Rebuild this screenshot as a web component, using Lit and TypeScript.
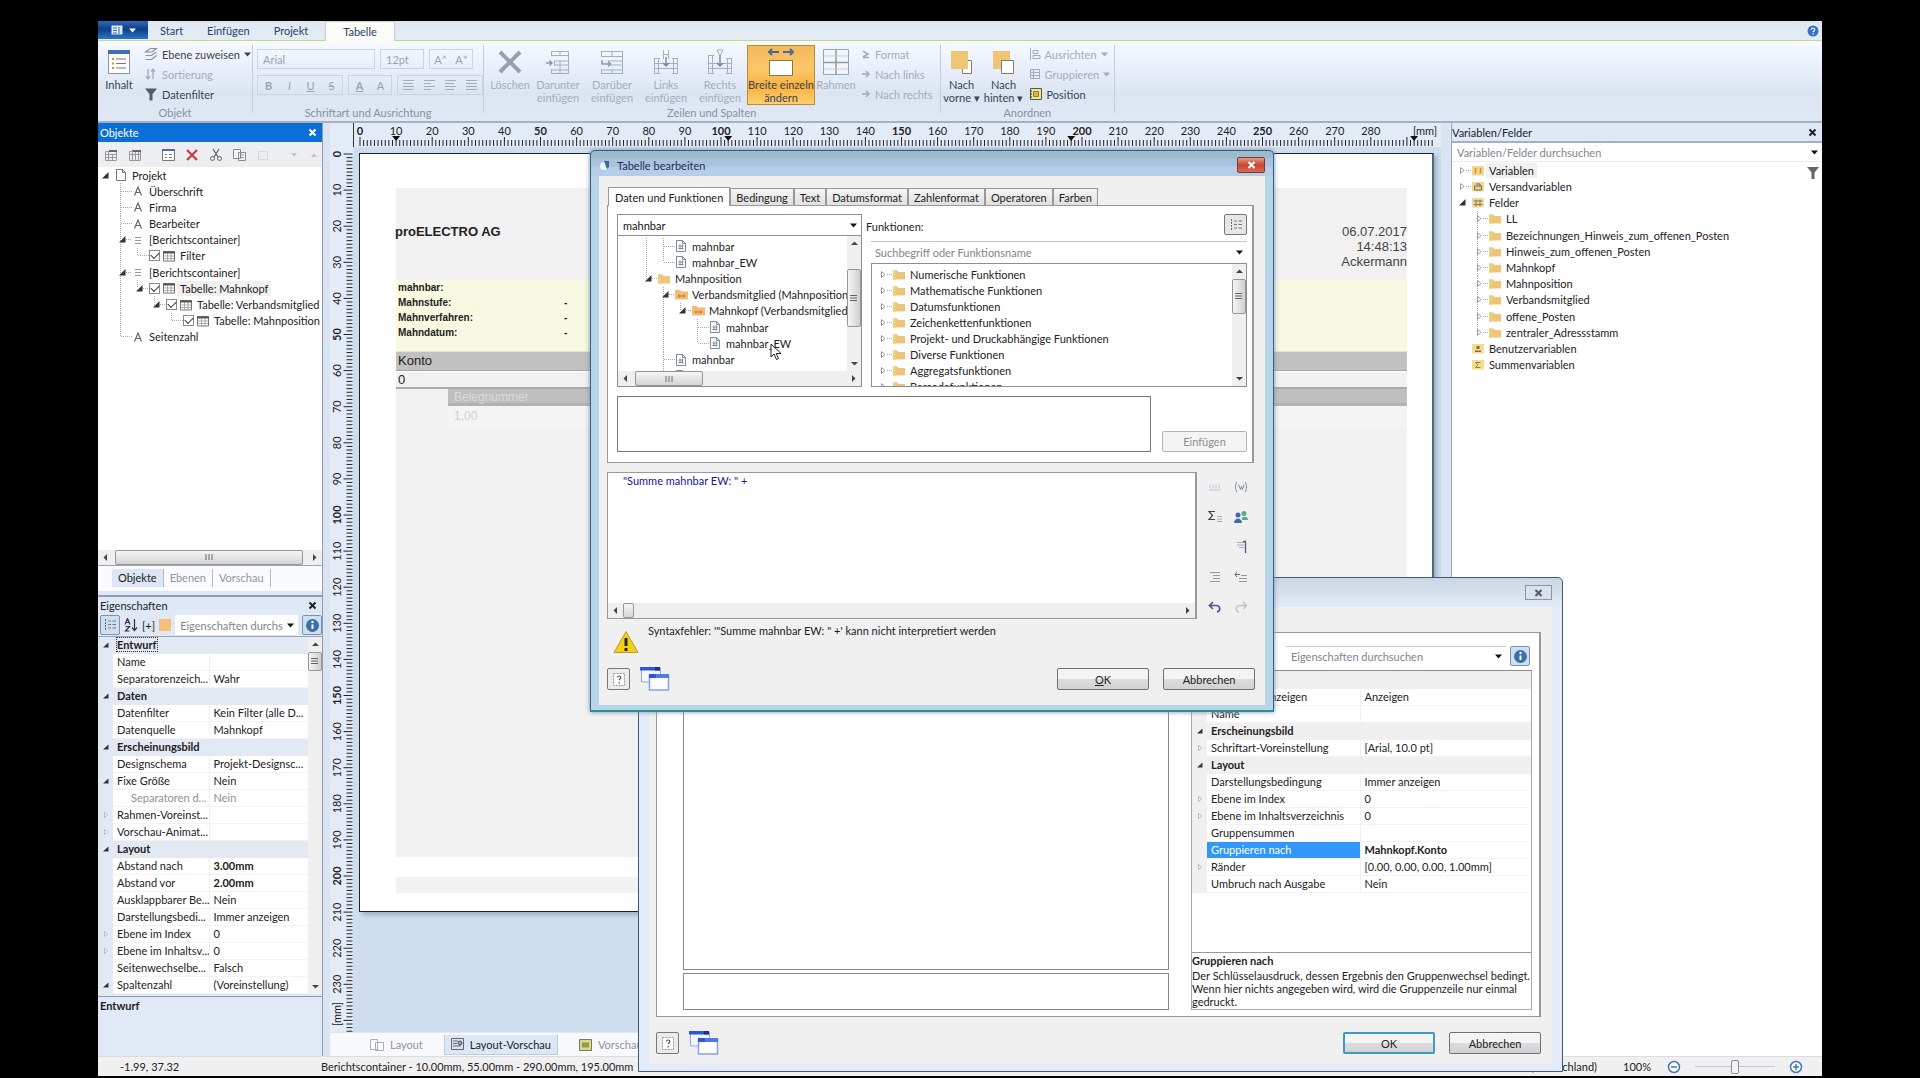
import { LitElement, html, svg, css, nothing } from "lit";
import { customElement, property } from "lit/decorators.js";
import { classMap } from "lit/directives/class-map.js";

const base = css`
  * { box-sizing: border-box; }
  button, input, textarea, select { font: inherit; color: inherit; margin: 0; padding: 0; border: 0; background: none; border-radius: 0; outline: none; }
  button { display: inline-flex; align-items: center; justify-content: center; }
  input::placeholder { color: #7f858c; opacity: 1; }
  svg { display: block; flex: none; }
`;

/* ---------- small icons ---------- */
const ic = (w: number, h: number, body: unknown) =>
  html`<svg width=${w} height=${h} viewBox="0 0 ${w} ${h}" fill="none" aria-hidden="true">${body}</svg>`;

const icons: Record<string, () => unknown> = {
  page: () => ic(12, 14, svg`<path d="M1.500 1.500h6l3 3v8h-9z" fill="#fff" stroke="#777"/><path d="M7.500 1.500v3h3" stroke="#777"/>`),
  text: () => ic(12, 12, svg`<path d="M2.500 10.500L6 2l3.500 8.500M3.800 7.500h4.400" stroke="#666" stroke-width="1.200"/>`),
  container: () => ic(12, 12, svg`<path d="M3 3.500h6M3 6.500h6M3 9.500h6" stroke="#999"/>`),
  table: () => ic(12, 12, svg`<path d="M.5 1.500h11v9.500H.5z" fill="#fff" stroke="#777"/><path d="M0 2.500h12" stroke="#555" stroke-width="2"/><path d="M1 6h10M1 8.500h10M4.500 3v8M8 3v8" stroke="#999" stroke-width=".8"/>`),
  folder: () => ic(12, 11, svg`<path d="M0 1.500h4.500l1 1.500H12v7.500H0z" fill="#efc47a"/><path d="M0 1.500h3v9H0z" fill="#e8cf7d"/>`),
  folderLink: () => ic(13, 11, svg`<path d="M0 1h5l1 1.500h7v8H0z" fill="#f4ba72"/><path d="M3 7h7M4.500 5.500L3 7l1.500 1.500M8.500 5.500L10 7 8.500 8.500" stroke="#b07a3a"/>`),
  vars: () => ic(12, 11, svg`<path d="M0 1h12v9.500H0z" fill="#f0d78c"/><path d="M3.500 3v5.500M8.500 3v5.500" stroke="#c9923e" stroke-width="1.500"/>`),
  mail: () => ic(12, 11, svg`<path d="M0 1h12v9.500H0z" fill="#ecd98f"/><path d="M2.500 5h7v4h-7zM4 3h4v2" stroke="#6d6a58"/>`),
  grid: () => ic(12, 11, svg`<path d="M0 1h12v9.500H0z" fill="#efdca0"/><path d="M1.500 4h9M1.500 7.500h9M4 2.500v7M8 2.500v7" stroke="#8a7a4a"/>`),
  user: () => ic(12, 11, svg`<path d="M0 1h12v9.500H0z" fill="#f2dd90"/><path d="M4.500 3h3v3h-3z" fill="#8a6a3a"/><path d="M3 9h6V7.500H3z" fill="#8a6a3a"/>`),
  sum: () => ic(12, 11, svg`<path d="M0 1h12v9.500H0z" fill="#f2e08c"/><path d="M8.500 3.500h-5L6 5.800 3.500 8.500h5" stroke="#8d8442"/>`),
  field: () => ic(12, 14, svg`<path d="M1.500 1.500h6l3 3v8h-9z" fill="#fff" stroke="#7f8a99"/><path d="M7.500 1.500v3h3M3.500 7h5M3.500 9.500h5M5 5.500v5M7.500 5.500v5" stroke="#7f8a99"/>`),
  info: () => ic(15, 15, svg`<circle cx="7.500" cy="7.500" r="6.500" fill="#3b6fa8"/><path d="M7.500 6.500v4.500" stroke="#fff" stroke-width="2"/><circle cx="7.500" cy="4" r="1.200" fill="#fff"/>`),
  listSort: () => ic(14, 14, svg`<path d="M2.500 1v12" stroke="#666" stroke-dasharray="2 1"/><path d="M5 3h3M5 6.500h3M5 10h3M9.500 3H13M9.500 6.500H13M9.500 10H13" stroke="#777"/>`),
  close: () => ic(9, 9, svg`<path d="M1.500 1.500l6 6M7.500 1.500l-6 6" stroke="currentColor" stroke-width="2"/>`),
  drop: () => ic(7, 5, svg`<path d="M0 .5h7L3.500 4.500z" fill="currentColor"/>`),
  question: () => ic(14, 15, svg`<path d="M1.500 1.500h11v12h-11z" fill="#fff" stroke="#999" stroke-dasharray="2 1"/><path d="M5.500 5.500c0-2 3.300-2 3.300 0 0 1.300-1.600 1.200-1.600 2.700M7.200 10v1.500" stroke="#555" stroke-width="1.200"/>`),
  windows: () => ic(31, 26, svg`<path d="M1.500 2h19v14h-19z" fill="#f4f7ff" stroke="#8fa8ee"/><path d="M0 1h20v3.500H0z" fill="#2f56d8"/><path d="M15 1h5v3.500h-5z" fill="#23307e"/><path d="M9.500 9h19v15h-19z" fill="#fdfdff" stroke="#86a0f0" stroke-width="1.500"/><path d="M9 8h20v4H9z" fill="#4f78ea"/><path d="M9 8h7v4H9z" fill="#2f56d8"/>`),
  warn: () => ic(26, 24, svg`<path d="M13 1.500L25 22.500H1z" fill="#f5cf12" stroke="#b79c2a" stroke-linejoin="round"/><path d="M13 8v8" stroke="#222" stroke-width="3"/><path d="M13 18v3" stroke="#222" stroke-width="3"/>`),
};

/* ---------- scroll bar ---------- */
@customElement("scroll-bar")
export class ScrollBar extends LitElement {
  @property() dir = "h";
  @property({ type: Number }) start = 0;
  @property({ type: Number }) size = 50;
  static styles = [base, css`
    :host { display: flex; flex: none; background: #efefef; }
    :host([dir="h"]) { height: 15px; }
    :host([dir="v"]) { width: 14px; flex-direction: column; }
    .arrow { flex: none; width: 15px; height: 15px; display: grid; place-items: center; }
    :host([dir="v"]) .arrow { width: 14px; }
    .track { flex: 1; display: flex; min-height: 0; min-width: 0; }
    :host([dir="v"]) .track { flex-direction: column; }
    .thumb { border: 1px solid #979797; border-radius: 2px; background: linear-gradient(#f6f6f6, #d4d4d4); display: grid; place-items: center; flex: none; }
    :host([dir="v"]) .thumb { background: linear-gradient(90deg, #f6f6f6, #cfcfd2); }
    .gap { flex: none; }
  `];
  render() {
    const v = this.dir === "v";
    const dim = v ? "height" : "width";
    return html`
      <span class="arrow">${ic(7, 7, v ? svg`<path d="M0 5h7L3.500 1.500z" fill="#444"/>` : svg`<path d="M5 0v7L1.500 3.500z" fill="#444"/>`)}</span>
      <span class="track">
        <span class="gap" style="${dim}:${this.start}%"></span>
        <span class="thumb" style="${dim}:${this.size}%">
          ${v ? ic(8, 8, svg`<path d="M0 1.500h7M0 4h7M0 6.500h7" stroke="#666"/>`) : this.size > 5 ? ic(8, 8, svg`<path d="M1 1v6M4 1v6M7 1v6" stroke="#666"/>`) : nothing}
        </span>
      </span>
      <span class="arrow">${ic(7, 7, v ? svg`<path d="M0 2h7L3.500 5.500z" fill="#444"/>` : svg`<path d="M2 0v7l3.500-3.500z" fill="#444"/>`)}</span>`;
  }
}

/* ---------- tree ---------- */
interface Node { l: number; t: string; i: string; x?: "open" | "closed"; check?: boolean; sel?: boolean; }

@customElement("tree-view")
export class TreeView extends LitElement {
  @property({ attribute: false }) nodes: Node[] = [];
  static styles = [base, css`
    :host { display: grid; grid-auto-rows: 1fr; overflow: hidden; }
    .row { display: flex; align-items: center; min-height: 0; white-space: nowrap; padding-left: 4px; }
    .cell { width: 17px; align-self: stretch; flex: none; display: flex; justify-content: flex-end; }
    .line { width: 1px; background: repeating-linear-gradient(#aaa 0 1px, transparent 1px 2px); height: 100%; }
    .line.end { height: 50%; }
    .elbow { width: 11px; flex: none; display: flex; align-items: center; }
    .elbow svg { margin-left: -2px; }
    .dots { flex: 1; height: 1px; background: repeating-linear-gradient(90deg, #aaa 0 1px, transparent 1px 2px); }
    .icon { width: 12px; height: 14px; display: grid; place-items: center; flex: none; }
    .text { margin-left: 2px; padding: 0 3px; line-height: 15px; }
    .sel .text { background: #f0f0f0; }
    input { appearance: none; width: 11px; height: 11px; border: 1px solid #8a8a8a; background: #fff; margin-right: 3px; flex: none; display: grid; place-items: center; }
    input:checked::after { content: ""; width: 7px; height: 4px; border-left: 1px solid #333; border-bottom: 1px solid #333; transform: rotate(-45deg); margin-bottom: 2px; }
  `];
  private line(i: number, k: number) {
    const rest = this.nodes.slice(i + 1);
    for (const n of rest) {
      if (n.l === k) return "on";
      if (n.l < k) break;
    }
    return this.nodes[i].l === k ? "end" : "";
  }
  render() {
    return this.nodes.map((n, i) => html`
      <div class=${classMap({ row: true, sel: !!n.sel })} role="treeitem">
        ${Array.from({ length: n.l }, (_, k) => {
          const s = this.line(i, k + 1);
          return html`<span class="cell">${s ? html`<span class="line ${s}"></span>` : nothing}</span>`;
        })}
        <span class="elbow">
          ${n.x === "open" ? ic(7, 7, svg`<path d="M6.500 0v6.500H0z" fill="#333"/>`) : nothing}
          ${n.x === "closed" ? ic(7, 9, svg`<path d="M1.500 1.500v6l3.500-3z" stroke="#999" fill="#fff"/>`) : nothing}
          ${n.l > 0 || n.x === "closed" ? html`<span class="dots"></span>` : nothing}
        </span>
        ${n.check ? html`<input type="checkbox" checked aria-label=${n.t}>` : nothing}
        <span class="icon">${icons[n.i]()}</span>
        <span class="text">${n.t}</span>
      </div>`);
  }
}

/* ---------- property grid ---------- */
interface Prop { n: string; v?: string; head?: boolean; x?: "open" | "closed"; dim?: boolean; bold?: boolean; sel?: boolean; focus?: boolean; pad?: boolean; }

@customElement("prop-grid")
export class PropGrid extends LitElement {
  @property({ attribute: false }) rows: Prop[] = [];
  @property() tone = "blue";
  static styles = [base, css`
    :host { display: block; min-width: 0; --band: #e2e9f2; --name: 96px; --gut: 15px; }
    :host([tone="gray"]) { --band: #f0f0f0; --name: 153px; --gut: 15px; }
    table { width: 100%; border-collapse: collapse; table-layout: fixed; background: #fff; }
    tr { height: 17px; }
    td, th { padding: 0; font-weight: normal; text-align: left; line-height: 16px; white-space: nowrap; overflow: hidden; border-bottom: 1px solid #f3f3f6; }
    .gut { width: var(--gut); background: var(--band); border-color: var(--band); }
    .gut svg { margin: 0 auto; }
    .name { width: var(--name); border-right: 1px solid #f0f0f3; padding-left: 4px; }
    .value { padding-left: 4px; }
    .head td, .head th { background: var(--band); border-color: var(--band); font-weight: bold; }
    .dim { color: #8f8f8f; }
    .bold .value { font-weight: bold; }
    .pad .name { padding-left: 18px; }
    .sel .name { background: #3296fa; color: #fff; }
    .focus .tag { outline: 1px dotted #333; }
  `];
  render() {
    return html`<table><tbody>${this.rows.map((r) => html`
      <tr class=${classMap({ head: !!r.head, dim: !!r.dim, bold: !!r.bold, sel: !!r.sel, focus: !!r.focus, pad: !!r.pad })}>
        <td class="gut">
          ${r.head || r.x === "open" ? ic(6, 6, svg`<path d="M5.500 .5v5H0z" fill="#333"/>`) : nothing}
          ${r.x === "closed" ? ic(6, 8, svg`<path d="M1.500 1.500v5l3-2.500z" stroke="#b5bbc4" fill="#fff"/>`) : nothing}
        </td>
        <th class="name" scope="row"><span class="tag">${r.n}</span></th>
        <td class="value">${r.v ?? ""}</td>
      </tr>`)}</tbody></table>`;
  }
}

/* ---------- millimetre ruler ---------- */
const MM = 3.61;
@customElement("mm-ruler")
export class MmRuler extends LitElement {
  @property() dir = "h";
  @property({ type: Number }) count = 298;
  @property({ attribute: false }) marks: number[] = [];
  static styles = [base, css`
    :host { display: block; flex: none; background: #e3ebf6; overflow: hidden; }
    :host([dir="h"]) { height: 24px; }
    :host([dir="v"]) { width: 23px; }
    text { font-size: 11px; fill: #222; text-anchor: middle; }
    .b { font-weight: bold; }
  `];
  render() {
    const h = this.dir === "h";
    const zero = h ? 6 : 7;
    const out = [];
    for (let i = 0; i <= this.count; i++) {
      const p = zero + i * MM;
      const len = i % 10 === 0 ? 9 : 6;
      out.push(h ? svg`<path d="M${p} 23v${-len}" stroke="#222"/>` : svg`<path d="M22.500 ${p}h${-len}" stroke="#222"/>`);
      if (i % 10 === 0 && i < this.count - 8) {
        const c = i % 50 === 0 ? "b" : "";
        out.push(h ? svg`<text class=${c} x=${p} y="12">${i}</text>` : svg`<text class=${c} transform="translate(11 ${p}) rotate(-90)">${i}</text>`);
      }
    }
    const e = h ? 1071 : 867;
    out.push(h ? svg`<text x=${e} y="12">[mm]</text>` : svg`<text transform="translate(11 ${e}) rotate(-90)">[mm]</text>`);
    for (const m of this.marks) out.push(svg`<path d="M${zero + m * MM - 4} 13h8l-4 5z" fill="#111"/>`);
    return html`<svg width=${h ? 1088 : 23} height=${h ? 24 : 885} aria-hidden="true">${out}</svg>`;
  }
}

const combo = (label: string, opts: { value?: string; ph?: string } = {}) => html`
  <span class="combo">
    <input type="text" aria-label=${label} .value=${opts.value ?? ""} placeholder=${opts.ph ?? ""}>
    <button type="button" aria-label="${label} öffnen">${icons.drop()}</button>
  </span>`;

const objects: Node[] = [
  { l: 0, t: "Projekt", i: "page", x: "open" },
  { l: 1, t: "Überschrift", i: "text" },
  { l: 1, t: "Firma", i: "text" },
  { l: 1, t: "Bearbeiter", i: "text" },
  { l: 1, t: "[Berichtscontainer]", i: "container", x: "open" },
  { l: 2, t: "Filter", i: "table", check: true },
  { l: 1, t: "[Berichtscontainer]", i: "container", x: "open" },
  { l: 2, t: "Tabelle: Mahnkopf", i: "table", check: true, x: "open", sel: true },
  { l: 3, t: "Tabelle: Verbandsmitglied", i: "table", check: true, x: "open" },
  { l: 4, t: "Tabelle: Mahnposition", i: "table", check: true },
  { l: 1, t: "Seitenzahl", i: "text" },
];
const variables: Node[] = [
  { l: 0, t: "Variablen", i: "vars", x: "closed", sel: true },
  { l: 0, t: "Versandvariablen", i: "mail", x: "closed" },
  { l: 0, t: "Felder", i: "grid", x: "open" },
  ...["LL", "Bezeichnungen_Hinweis_zum_offenen_Posten", "Hinweis_zum_offenen_Posten", "Mahnkopf", "Mahnposition", "Verbandsmitglied", "offene_Posten", "zentraler_Adressstamm"]
    .map((t): Node => ({ l: 1, t, i: "folder", x: "closed" })),
  { l: 0, t: "Benutzervariablen", i: "user" },
  { l: 0, t: "Summenvariablen", i: "sum" },
];
const found: Node[] = [
  { l: 2, t: "mahnbar", i: "field" },
  { l: 2, t: "mahnbar_EW", i: "field" },
  { l: 1, t: "Mahnposition", i: "folder", x: "open" },
  { l: 2, t: "Verbandsmitglied (Mahnposition", i: "folderLink", x: "open" },
  { l: 3, t: "Mahnkopf (Verbandsmitglied", i: "folderLink", x: "open" },
  { l: 4, t: "mahnbar", i: "field" },
  { l: 4, t: "mahnbar_EW", i: "field" },
  { l: 2, t: "mahnbar", i: "field" },
  { l: 2, t: "mahnbar_EW", i: "field" },
];
const functions: Node[] = ["Numerische Funktionen", "Mathematische Funktionen", "Datumsfunktionen", "Zeichenkettenfunktionen", "Projekt- und Druckabhängige Funktionen", "Diverse Funktionen", "Aggregatsfunktionen", "Barcodefunktionen"]
  .map((t) => ({ l: 0, t, i: "folder", x: "closed" }));

const props: Prop[] = [
  { n: "Entwurf", head: true, focus: true },
  { n: "Name" },
  { n: "Separatorenzeich...", v: "Wahr" },
  { n: "Daten", head: true },
  { n: "Datenfilter", v: "Kein Filter (alle D..." },
  { n: "Datenquelle", v: "Mahnkopf" },
  { n: "Erscheinungsbild", head: true },
  { n: "Designschema", v: "Projekt-Designsc..." },
  { n: "Fixe Größe", v: "Nein", x: "open" },
  { n: "Separatoren d...", v: "Nein", dim: true, pad: true },
  { n: "Rahmen-Voreinst...", x: "closed" },
  { n: "Vorschau-Animat...", x: "closed" },
  { n: "Layout", head: true },
  { n: "Abstand nach", v: "3.00mm", bold: true },
  { n: "Abstand vor", v: "2.00mm", bold: true },
  { n: "Ausklappbarer Be...", v: "Nein" },
  { n: "Darstellungsbedi...", v: "Immer anzeigen" },
  { n: "Ebene im Index", v: "0", x: "closed" },
  { n: "Ebene im Inhaltsv...", v: "0", x: "closed" },
  { n: "Seitenwechselbe...", v: "Falsch" },
  { n: "Spaltenzahl", v: "(Voreinstellung)", x: "open" },
];
const groupProps: Prop[] = [
  { n: "", head: true },
  { n: "Kopfzeilen anzeigen", v: "Anzeigen" },
  { n: "Name" },
  { n: "Erscheinungsbild", head: true },
  { n: "Schriftart-Voreinstellung", v: "[Arial, 10.0 pt]", x: "closed" },
  { n: "Layout", head: true },
  { n: "Darstellungsbedingung", v: "Immer anzeigen" },
  { n: "Ebene im Index", v: "0", x: "closed" },
  { n: "Ebene im Inhaltsverzeichnis", v: "0", x: "closed" },
  { n: "Gruppensummen" },
  { n: "Gruppieren nach", v: "Mahnkopf.Konto", bold: true, sel: true },
  { n: "Ränder", v: "[0.00, 0.00, 0.00, 1.00mm]", x: "closed" },
  { n: "Umbruch nach Ausgabe", v: "Nein" },
];

/* ---------- ribbon drawings ---------- */
const big = {
  content: ic(24, 26, svg`<path d="M1.500 1.500h21v23h-21z" fill="#fff" stroke="#8c95a3"/><path d="M1 1h22v4H1z" fill="#3f72b4"/><path d="M5 10h2M5 14.500h2M5 19h2" stroke="#e08a3a" stroke-width="2"/><path d="M9 10h10M9 14.500h10M9 19h10" stroke="#777"/>`),
  del: ic(26, 26, svg`<path d="M3 3l20 20M23 3L3 23" stroke="#98a0ac" stroke-width="4"/>`),
  below: ic(26, 26, svg`<path d="M6 2.500h18M6 6.500h18M9 12h15M9 16h15M6 21h18M6 24.500h18M6.500 2v5M15 2v5M23.500 2v23M9.500 12v5M15 12v13M6.500 20v5" stroke="#a6afbc"/><path d="M1 14h6M4.500 11.500L7 14l-2.500 2.500" stroke="#8e98a6" stroke-width="1.500"/>`),
  above: ic(26, 26, svg`<path d="M2 2.500h22M2 7.500h22M9 12h15M9 16h15M2 21h22M2 24.500h22M2.500 2v6M13 2v6M23.500 2v23M2.500 20v5M13 20v5" stroke="#a6afbc"/><path d="M3 11v4h8M9 12.500l2.500 2.500L9 17.500" stroke="#8e98a6" stroke-width="1.500"/>`),
  left: ic(26, 26, svg`<path d="M1.500 9v16M5.500 9v16M20.500 9v16M24.500 9v16M1 9.500h6M19 9.500h6M1 14.500h24M1 19.500h24M1 24.500h6M19 24.500h6M10.500 1v9M15.500 1v9M10 5.500h6" stroke="#a6afbc"/><path d="M13 8v9M10 14l3 3 3-3" stroke="#828c9a" stroke-width="1.500"/>`),
  right: ic(26, 26, svg`<path d="M1.500 6v19M5.500 6v19M20.500 9v16M24.500 9v16M1 6.500h6M19 9.500h6M1 14.500h24M1 19.500h24M1 24.500h6M19 24.500h6M10 1h6l-3 6z" stroke="#a6afbc"/><path d="M13 6v11M10 14l3 3 3-3" stroke="#828c9a" stroke-width="1.500"/>`),
  width: ic(26, 28, svg`<path d="M1 4h10M15 4h10M4 1L1 4l3 3M22 1l3 3-3 3" stroke="#4b6a9b" stroke-width="2"/><path d="M1.500 12.500h23v15h-23z" fill="#fff" stroke="#8b7440"/>`),
  frame: ic(26, 26, svg`<path d="M.5 .5h25v25H.5z" fill="#f2f5fa" stroke="#9aa4b2"/><path d="M13 1v24M1 13.500h24" stroke="#8e98a6" stroke-width="1.500"/><path d="M1 7h24M1 20h24" stroke="#c8d0dc"/>`),
  front: ic(24, 28, svg`<path d="M12.500 12.500h9v13h-9z" fill="#fff" stroke="#8a7a66"/><path d="M1 3h17v18H1z" fill="#efc675"/>`),
  back: ic(24, 28, svg`<path d="M1 3h17v18H1z" fill="#efc675"/><path d="M9.500 12.500h12v13h-12z" fill="#fff" stroke="#8a7a66"/>`),
};
const sm = {
  layers: ic(14, 14, svg`<path d="M1.500 5l5-3.500h6L8 5zM1.500 8.500h6l5-3.500M1.500 12.500h6l5-4" stroke="#888f9a" stroke-width="1.200"/>`),
  sort: ic(14, 14, svg`<path d="M4 2v10M9 2v10M2 9.500L4 12l2-2.500M7 4.500L9 2l2 2.500" stroke="#a3abb8" stroke-width="1.300"/>`),
  filter: ic(14, 14, svg`<path d="M1 1.500h12L8.500 7v6.500h-3V7z" fill="#555b64"/>`),
  fmt: ic(10, 10, svg`<path d="M2 2l5 3-5 3M2 8.500h6" stroke="#a3abb8" stroke-width="1.500"/>`),
  dot: ic(10, 10, svg`<path d="M1 5h7M5 2l3 3-3 3" stroke="#a3abb8" stroke-width="1.500"/>`),
  align: ic(12, 14, svg`<path d="M1.500 1v12M4 3.500h5v3H4zM4 8.500h7v3H4z" stroke="#a3abb8"/>`),
  group: ic(12, 14, svg`<path d="M1.500 2.500h9v9h-9zM1.500 5.500h9M1.500 8.500h9M4.500 2.500v9" stroke="#a3abb8"/>`),
  pos: ic(14, 14, svg`<path d="M1.500 1.500h11v11h-11z" fill="#eee79a" stroke="#555"/><path d="M4.500 4.500h5v5h-5z" fill="#d5b94a" stroke="#8a7a2a"/><path d="M1 4h2M1 7h2M1 10h2" stroke="#333"/>`),
};
const largeBtn = (drawing: unknown, a: string, b = "", cls = "") => html`
  <button type="button" class="large ${cls}"><span class="pic">${drawing}</span><span>${a}</span><span>${b}</span></button>`;
const smallBtn = (drawing: unknown, t: string, cls = "", drop = false) => html`
  <button type="button" class="small ${cls}">${drawing}<span>${t}</span>${drop ? icons.drop() : nothing}</button>`;

const helpPair = html`
  <button type="button" class="help" aria-label="Hilfe">${icons.question()}</button>
  <button type="button" class="wins" aria-label="Fenster">${icons.windows()}</button>`;

@customElement("app-root")
export class AppRoot extends LitElement {
  static styles = [base, css`
    :host { display: block; height: 100vh; background: #000; font-family: Lato, "Open Sans", sans-serif; font-size: 11px; line-height: 15px; color: #222; }
    .app { position: relative; height: 100%; margin: 0 98px; padding-top: 21px; display: flex; flex-direction: column; overflow: hidden; }
    .tabs { height: 20px; flex: none; display: flex; align-items: stretch; background: linear-gradient(#e0e7f2, #e4edf3); border-bottom: 1px solid #bddd84; color: #2b3e6e; }
    .tabs button { padding: 0 12px; }
    .tabs .menu { width: 50px; padding: 0; gap: 6px; margin-bottom: 1px; background: linear-gradient(#2f6ab8, #0d3f87 45%, #2a74c8); color: #fff; }
    .tabs .active { background: #fbfdf6; border: 1px solid #c5cdd8; border-bottom: 0; margin: 0 0 -1px 5px; padding: 0 17px; }
    .tabs .q { margin-left: auto; padding: 0 3px; }

    .ribbon { height: 82px; flex: none; display: flex; background: linear-gradient(#f6fafe, #e8effa 35%, #dbe5f1 65%, #e0e8f4); border-bottom: 2px solid #a3b1c4; color: #3a4354; }
    .group { display: flex; flex-direction: column; border-right: 1px solid #c3cedd; margin: 4px 0 8px; }
    .tools { flex: 1; display: flex; min-height: 0; }
    .cap { text-align: center; line-height: 13px; height: 13px; color: #8791a3; margin-bottom: -6px; }
    .large { flex-direction: column; justify-content: flex-start; line-height: 13px; padding: 1px 0 0; width: 54px; white-space: nowrap; flex: none; }
    .large .pic { height: 32px; display: grid; place-items: center; flex: none; }
    .large.n { width: 42px; }
    .large.w { width: 68px; background: linear-gradient(#f2b95a, #fbc76a 40%, #f9b13d 70%, #fdd070); border: 1px solid #b98d3c; padding: 0; height: 60px; }
    .off { color: #a4adbb; }
    .smalls { display: flex; flex-direction: column; justify-content: space-between; padding: 1px 4px 1px; height: 58px; align-items: flex-start; }
    .small { gap: 4px; white-space: nowrap; height: 16px; }
    .fonts { flex: 1; padding: 4px 4px 0; display: flex; flex-direction: column; gap: 6px; color: #9aa3b2; }
    .frow { display: flex; gap: 5px; height: 20px; }
    .frow span.box { display: flex; border: 1px solid #cbd4e1; align-items: center; }
    .frow select { appearance: none; height: 18px; color: #9aa3b2; padding: 0 5px; }
    .frow button { width: 21px; }
    .serif { font-weight: bold; }
    .cells { padding: 0 3px 0 5px; }

    .main { flex: 1; min-height: 0; display: flex; background: #dbe5f2; }
    .left { width: 225px; flex: none; display: flex; flex-direction: column; border-right: 1px solid #8e9db5; background: #dfe8f4; }
    .title { height: 18px; flex: none; display: flex; align-items: center; justify-content: space-between; padding: 0 4px 0 2px; background: #dfe8f5; }
    .title button { width: 12px; height: 12px; }
    .title.on { background: #0c6fd8; color: #fff; height: 19px; }
    .bar { height: 25px; flex: none; display: flex; align-items: center; gap: 10px; padding: 0 6px; background: #eceef2; }
    .bar i { width: 1px; height: 18px; background: #b8bec8; }
    .treebox { flex: 1; min-height: 0; background: #fff; display: flex; flex-direction: column; justify-content: space-between; }
    .objtree { height: 178px; margin-left: 2px; }
    .ltabs { height: 26px; flex: none; display: flex; align-items: flex-start; background: #fafbfd; border-top: 1px solid #9aa5b5; padding: 3px 14px; color: #8f959e; }
    .ltabs button { height: 18px; padding: 0 6px; border-right: 1px solid #b5bbc4; }
    .ltabs .active { background: #dce6f4; color: #222; }
    .lower { flex: none; display: flex; flex-direction: column; border-top: 2px solid #8e9db5; margin-top: 4px; }
    .pbar { height: 22px; display: flex; align-items: center; gap: 4px; border-bottom: 1px solid #9aa5b5; padding-left: 2px; }
    .pbar .combo { flex: 1; min-width: 0; height: 20px; background: #fff; }
    .pbar button.ib, .ib { width: 20px; height: 20px; border: 1px solid #7d93ad; background: #cfdff2; border-radius: 2px; flex: none; }
    .sw { width: 12px; height: 12px; background: #f4c078; }
    .pgrid { display: flex; }
    .pgrid prop-grid { flex: 1; }
    .desc { height: 60px; border-top: 1px solid #8e9db5; margin-top: 2px; padding: 1px 2px; font-weight: bold; background: #e0e9f5; }

    .combo { display: flex; align-items: center; }
    .combo input { flex: 1; min-width: 0; padding-left: 5px; text-overflow: clip; }
    .combo button { width: 15px; height: 100%; color: #111; }

    .center { flex: 1; min-width: 0; display: flex; flex-direction: column; margin-left: 7px; }
    .ctop { display: flex; padding-left: 23px; background: #e3ebf6; }
    .ctop mm-ruler { flex: 1; border-left: 1px solid #333; }
    .cmid { flex: 1; min-height: 0; display: flex; overflow: hidden; }
    .canvas { flex: 1; min-width: 0; background: #cfdeee; padding: 6px 7px 0 6px; }
    .sheet { background: #fff; border: 1px solid #1b2430; border-right: 2px solid #54657e; box-shadow: 3px 3px 4px #9fb2c8; padding: 34px 25px 18px 36px; font-family: "Liberation Sans", Arial, sans-serif; }
    .area { background: #f1f1f1; height: 669px; }
    .lead { height: 92px; display: flex; justify-content: space-between; padding-top: 36px; font-size: 13px; }
    .lead strong { margin-left: -1px; line-height: 15px; }
    .lead div { text-align: right; line-height: 15px; color: #444; }
    .info { height: 72px; background: #f8f9e0; font-size: 10px; font-weight: bold; padding: 0 2px; border-bottom: 1px solid #e4e5cc; }
    .info div { display: flex; height: 15px; align-items: center; }
    .info span { width: 166px; }
    .hd { background: #c1c1c1; height: 19px; font-size: 13px; line-height: 18px; padding-left: 2px; border-bottom: 1px solid #a5a5a5; }
    .rw { height: 18px; font-size: 13px; line-height: 16px; padding-left: 2px; border-top: 1px solid #fff; border-bottom: 2px solid #aaa; }
    .sub { margin-left: 52px; font-size: 12px; }
    .sub .h2 { background: #bfbfbf; color: #dadada; height: 17px; line-height: 16px; padding-left: 6px; border-bottom: 3px solid #b2b2b2; }
    .sub .r2 { height: 22px; line-height: 20px; color: #d0d0d0; padding-left: 6px; background: #f4f4f4; }
    .foot { height: 16px; background: #f2f2f2; margin-top: 20px; }
    .ctabs { height: 24px; flex: none; display: flex; align-items: center; padding: 0 0 0 34px; gap: 15px; background: #f7f9fc; border-top: 1px solid #dfe6f0; color: #8f959e; }
    .ctabs button { gap: 6px; height: 20px; padding: 0 6px; }
    .ctabs .active { background: #dce7f5; color: #222; border: 1px solid #c0cad8; border-top: 0; }

    .right { width: 371px; flex: none; margin-left: 10px; display: flex; flex-direction: column; background: #fff; border-left: 1px solid #9aa8bf; }
    .right .title { border-bottom: 2px solid #a4afc0; height: 20px; padding: 0 4px 0 0; }
    .search { height: 18px; display: flex; }
    .search .combo { flex: 1; }
    .rt { display: flex; align-items: flex-start; border-top: 1px solid #ececec; justify-content: space-between; }
    .vartree { height: 211px; margin-left: 5px; flex: 1; }
    .rt > svg { margin: 4px 3px 0 0; }

    .status { height: 20px; flex: none; display: flex; align-items: center; background: #f0f0f0; border-top: 1px solid #d8dde4; margin-bottom: 2px; padding: 0 19px 0 22px; }
    .status .p { width: 201px; }
    .status .s { flex: 1; }
    .zoom { display: flex; align-items: center; gap: 14px; }
    .zoom span { margin: 0 2px 0 26px; }
    .zoom input { appearance: none; width: 80px; height: 14px; background: linear-gradient(#c3c8cf, #c3c8cf) center / 100% 1px no-repeat; }
    .zoom input::-webkit-slider-thumb { appearance: none; width: 8px; height: 14px; border: 1px solid #8b929b; background: #f4f4f4; border-radius: 2px; }

    .win { position: absolute; display: flex; flex-direction: column; border: 1px solid #3e5a78; }
    .win .wt { display: flex; align-items: center; flex: none; }
    .win .wt h2 { font: inherit; margin: 0; flex: 1; }
    .win .body { flex: 1; min-height: 0; background: #f0f0f0; display: flex; flex-direction: column; }
    .btn { height: 22px; width: 92px; border: 1px solid #707070; border-radius: 2px; background: linear-gradient(#f4f4f4 48%, #dcdcdc 52%, #d2d2d2); color: #222; }
    .btn.def { border: 2px solid #3c9cc9; }
    .btn.dis { color: #8d8d8d; border-color: #b4b4b4; background: #f4f4f4; width: 85px; height: 21px; }
    .actions { display: flex; align-items: center; }
    .actions .grow { flex: 1; }
    .help { width: 23px; height: 22px; border: 1px solid #777; background: #ececec; border-radius: 2px; margin-right: 10px; }
    u { text-decoration: underline; }

    .group-win { left: 540px; top: 577px; width: 925px; height: 495px; background: linear-gradient(#cbd6e4, #e3ebf6 30px); padding: 0 10px 7px; border-radius: 5px 5px 0 0; }
    .group-win .wt { height: 29px; justify-content: flex-end; }
    .group-win .x { width: 27px; height: 15px; border: 1px solid #8895a8; background: #d9e1ec; color: #556; }
    .group-win .body { padding: 25px 11px 0 7px; }
    .gpage { height: 385px; background: #fff; border: 1px solid #999; border-right-width: 2px; display: flex; padding: 13px 7px 6px 26px; gap: 22px; }
    .gl { flex: 1; display: flex; flex-direction: column; gap: 3px; }
    .gl div { border: 1px solid #888; flex: 1; }
    .gl div + div { flex: none; height: 37px; }
    .gr { width: 341px; display: flex; flex-direction: column; }
    .gs { display: flex; justify-content: flex-end; height: 24px; gap: 4px; align-items: flex-start; padding-right: 2px; }
    .gs .combo { width: 220px; height: 20px; border-top: 1px solid #ccc; }
    .gb { flex: 1; border: 1px solid #aaa; border-top: 1px solid #888; display: flex; flex-direction: column; justify-content: space-between; }
    .gd { height: 57px; border-top: 1px solid #999; line-height: 13px; }
    .gd b { display: block; line-height: 16px; }
    .group-win .actions { padding-top: 13px; }

    .edit-win { left: 492px; top: 150px; width: 684px; height: 562px; border-color: #2c5e86; border-bottom: 2px solid #2a9098; background: linear-gradient(#9cbccb 7px, #a9c2e0 8px 15px, #b6cdea 16px 25px, #b9d5ea 26px); padding: 0 8px 5px; border-radius: 5px 5px 0 0; box-shadow: 0 0 5px #7c8ea6; }
    .edit-win .wt { height: 25px; color: #1e2f52; gap: 6px; padding-top: 4px; }
    .edit-win .x { width: 28px; height: 16px; border: 1px solid #7b3a32; border-radius: 2px; background: linear-gradient(#e59a8a, #cc4531 50%, #d96b50); color: #fff; margin-bottom: 2px; }
    .edit-win .body { padding: 11px 8px 0; }
    .dtabs { display: flex; height: 18px; align-items: flex-end; padding-left: 1px; }
    .dtabs button { height: 17px; border: 1px solid #999; border-bottom: 0; background: linear-gradient(#f4f4f4, #e0e0e0); padding: 0 5px; white-space: nowrap; }
    .dtabs .active { height: 19px; background: #fff; margin-bottom: -1px; padding: 0 6px; position: relative; }
    .dpage { height: 258px; background: #fff; border: 1px solid #999; border-right-width: 2px; margin-right: 3px; padding: 8px 5px 0 9px; display: flex; flex-direction: column; flex: none; }
    .two { display: flex; gap: 4px; height: 173px; flex: none; }
    .lf { width: 245px; border: 1px solid #8a8f96; display: flex; flex-direction: column; overflow: hidden; }
    .lf .combo { height: 21px; border-bottom: 1px solid #8a8f96; flex: none; }
    .lf .combo input { color: #111; }
    .lfb { flex: 1; min-height: 0; display: flex; overflow: hidden; }
    .lfb tree-view { flex: 1; min-width: 0; height: 146px; padding-left: 8px; margin-top: 2px; }
    .rf { flex: 1; display: flex; flex-direction: column; }
    .fl { height: 27px; display: flex; justify-content: space-between; }
    .fl label { line-height: 25px; }
    .fl button { width: 23px; height: 21px; border: 1px solid #777; background: #e6e6e6; border-radius: 2px; }
    .rf .combo { margin-left: 5px; height: 22px; border-top: 1px solid #c8c8c8; }
    .rf .combo input { padding-left: 4px; }
    .fb { flex: 1; min-height: 0; margin-left: 5px; border: 1px solid #8a8f96; display: flex; overflow: hidden; }
    .fb tree-view { flex: 1; height: 129px; padding-left: 6px; margin-top: 2px; }
    .ins { display: flex; margin-top: 9px; gap: 11px; align-items: flex-end; }
    .ins textarea { flex: 1; height: 56px; border: 1px solid #777; resize: none; }
    .formula { display: flex; margin-top: 9px; height: 147px; flex: none; }
    .fx { width: 590px; border: 1px solid #999; border-right-width: 2px; background: #fff; display: flex; flex-direction: column; }
    .fx textarea { flex: 1; resize: none; overflow: hidden; color: #23139c; padding: 0 15px; }
    .tool { flex: 1; display: grid; grid-template-columns: 26px 26px; grid-auto-rows: 30px; margin-left: 5px; justify-content: flex-start; }
    .err { display: flex; gap: 9px; padding: 4px 0 0 6px; height: 47px; flex: none; }
    .err > svg { margin-top: 7px; }
    .edit-win .actions { padding-right: 2px; }
    .actions .btn + .btn { margin-left: 14px; }
    .cursor { position: absolute; left: 672px; top: 343px; }
  `];

  firstUpdated() {
    const field = this.renderRoot.querySelector<HTMLInputElement>(".lf input");
    field?.focus();
    field?.setSelectionRange(field.value.length, field.value.length);
  }

  render() {
    return html`
      <div class="app">
        ${this.ribbon()}
        <div class="main">
          ${this.left()}
          ${this.center()}
          ${this.right()}
        </div>
        <footer class="status">
          <span class="p">-1.99, 37.32</span>
          <span class="s">Berichtscontainer - 10.00mm, 55.00mm - 290.00mm, 195.00mm</span>
          <span>(Deutschland)</span>
          <div class="zoom">
            <span>100%</span>
            ${ic(14, 14, svg`<circle cx="7" cy="7" r="5.500" stroke="#3f77b5" stroke-width="1.500" fill="#fff"/><path d="M4 7h6" stroke="#3f77b5" stroke-width="1.500"/>`)}
            <input type="range" aria-label="Zoom" min="0" max="100" value="50">
            ${ic(14, 14, svg`<circle cx="7" cy="7" r="5.500" stroke="#3f77b5" stroke-width="1.500" fill="#fff"/><path d="M4 7h6M7 4v6" stroke="#3f77b5" stroke-width="1.500"/>`)}
          </div>
        </footer>
        ${this.groupDialog()}
        ${this.editDialog()}
        <svg class="cursor" width="12" height="18" viewBox="0 0 12 18" aria-hidden="true"><path d="M1 1v13l3-3 2.500 5.500 2-1L6.200 10.500H11z" fill="#fff" stroke="#222"/></svg>
      </div>`;
  }

  private ribbon() {
    return html`
      <nav class="tabs">
        <button type="button" class="menu" aria-label="Menü">${ic(12, 12, svg`<path d="M.5 1.500h11v9H.5z" fill="#dfe9f7"/><path d="M2 4h4M2 6.500h4M2 9h4M8 3v7" stroke="#3b6cb0"/>`)}${icons.drop()}</button>
        <button type="button">Start</button>
        <button type="button">Einfügen</button>
        <button type="button">Projekt</button>
        <button type="button" class="active">Tabelle</button>
        <button type="button" class="q" aria-label="Hilfe">${ic(12, 12, svg`<circle cx="6" cy="6" r="5.500" fill="#3a6fc9"/><path d="M4.300 4.800c0-2.200 3.400-2 3.400 0 0 1.200-1.600 1.100-1.600 2.400M6.100 8.300v1.200" stroke="#fff" stroke-width="1.200"/>`)}</button>
      </nav>
      <div class="ribbon">
        <section class="group" style="width:155px">
          <div class="tools">
            ${largeBtn(big.content, "Inhalt", "", "n")}
            <div class="smalls">
              ${smallBtn(sm.layers, "Ebene zuweisen", "", true)}
              ${smallBtn(sm.sort, "Sortierung", "off")}
              ${smallBtn(sm.filter, "Datenfilter")}
            </div>
          </div>
          <div class="cap">Objekt</div>
        </section>
        <section class="group" style="width:231px">
          <div class="tools fonts">
            <div class="frow">
              <span class="box" style="width:118px"><select aria-label="Schriftart"><option>Arial</option></select></span>
              <span class="box" style="width:44px"><select aria-label="Schriftgröße"><option>12pt</option></select></span>
              <span class="box"><button type="button">A˄</button><button type="button">A˅</button></span>
            </div>
            <div class="frow">
              <span class="box"><button type="button"><b>B</b></button><button type="button"><i>I</i></button><button type="button"><u>U</u></button><button type="button"><s>S</s></button></span>
              <span class="box"><button type="button" class="serif"><u>A</u></button><button type="button">A</button></span>
              <span class="box">${[10, 7, 9, 11].map((w) => html`<button type="button" aria-label="Ausrichtung">${ic(12, 12, svg`<path d="M0 1.500h11M0 4.500h${w}M0 7.500h11M0 10.500h${w}" stroke="#a3abb8"/>`)}</button>`)}</span>
            </div>
          </div>
          <div class="cap">Schriftart und Ausrichtung</div>
        </section>
        <section class="group">
          <div class="tools cells">
            ${largeBtn(big.del, "Löschen", "", "off n")}
            ${largeBtn(big.below, "Darunter", "einfügen", "off")}
            ${largeBtn(big.above, "Darüber", "einfügen", "off")}
            ${largeBtn(big.left, "Links", "einfügen", "off")}
            ${largeBtn(big.right, "Rechts", "einfügen", "off")}
            ${largeBtn(big.width, "Breite einzeln", "ändern", "w")}
            ${largeBtn(big.frame, "Rahmen", "", "off n")}
            <div class="smalls">
              ${smallBtn(sm.fmt, "Format", "off")}
              ${smallBtn(sm.dot, "Nach links", "off")}
              ${smallBtn(sm.dot, "Nach rechts", "off")}
            </div>
          </div>
          <div class="cap">Zeilen und Spalten</div>
        </section>
        <section class="group">
          <div class="tools">
            ${largeBtn(big.front, "Nach", "vorne ▾", "n")}
            ${largeBtn(big.back, "Nach", "hinten ▾", "n")}
            <div class="smalls">
              ${smallBtn(sm.align, "Ausrichten", "off", true)}
              ${smallBtn(sm.group, "Gruppieren", "off", true)}
              ${smallBtn(sm.pos, "Position")}
            </div>
          </div>
          <div class="cap">Anordnen</div>
        </section>
      </div>`;
  }

  private left() {
    return html`
      <aside class="left">
        <div class="title on"><span>Objekte</span><button type="button" aria-label="Schließen">${icons.close()}</button></div>
        <div class="bar">
          ${ic(14, 14, svg`<path d="M1.500 3.500h11v9h-11zM4.500 3.500v9M1.500 6.500h11M1.500 9.500h11M8.500 6.500v6" stroke="#999"/><path d="M5 3h8" stroke="#666" stroke-width="2"/>`)}
          ${ic(14, 14, svg`<path d="M1.500 3.500h11v9h-11zM4.500 1.500v11M7.500 3.500v9M10.500 3.500v9M1.500 6.500h11" stroke="#999"/><path d="M5 3h8" stroke="#666" stroke-width="2"/>`)}
          <i></i>
          ${ic(13, 14, svg`<path d="M.5 1.500h12v11H.5z" fill="#fff" stroke="#777"/><path d="M0 2h13" stroke="#47709f" stroke-width="2"/><path d="M3 6.500h2M3 9.500h2M7 6.500h3M7 9.500h3" stroke="#777"/>`)}
          ${ic(14, 14, svg`<path d="M2 2l10 10M12 2L2 12" stroke="#c9333a" stroke-width="2"/>`)}
          ${ic(14, 14, svg`<path d="M4 1l5 8M10 1L5 9" stroke="#666" stroke-width="1.300"/><circle cx="3.500" cy="10.500" r="2" stroke="#666"/><circle cx="10.500" cy="10.500" r="2" stroke="#666"/>`)}
          ${ic(14, 14, svg`<path d="M.5 1.500h7v9h-7zM5.500 4.500h7v8h-7z" fill="#f4f4f4" stroke="#888"/><path d="M7.500 7h3M7.500 9.500h3" stroke="#888"/>`)}
          ${ic(12, 12, svg`<path d="M1.500 2.500h9v8h-9z" stroke="#d5d8dd"/>`)}
          <i></i>
          ${ic(10, 10, svg`<path d="M2 3h6L5 7z" fill="#c3c7cd"/>`)}
          ${ic(10, 10, svg`<path d="M2 7h6L5 3z" fill="#c3c7cd"/>`)}
        </div>
        <div class="treebox">
          <tree-view class="objtree" role="tree" aria-label="Objekte" .nodes=${objects}></tree-view>
          <scroll-bar dir="h" start="1" size="97"></scroll-bar>
        </div>
        <div class="ltabs"><button type="button" class="active">Objekte</button><button type="button">Ebenen</button><button type="button">Vorschau</button></div>
        <div class="lower">
          <div class="title"><span>Eigenschaften</span><button type="button" aria-label="Schließen">${icons.close()}</button></div>
          <div class="pbar">
            <button type="button" class="ib" aria-label="Kategorien">${icons.listSort()}</button>
            ${ic(14, 14, svg`<path d="M1 6.500L3.500 .5 6 6.500M2 4.500h3M1.500 8.500h4l-4 4.500h4M10.500 1v11M8 9.500l2.500 3 2.500-3" stroke="#333" stroke-width="1.200"/>`)}
            <span>[+]</span>
            <span class="sw"></span>
            ${combo("Eigenschaften durchsuchen", { ph: "Eigenschaften durchsuchen" })}
            <button type="button" class="ib" aria-label="Info">${icons.info()}</button>
          </div>
          <div class="pgrid">
            <prop-grid tone="blue" .rows=${props}></prop-grid>
            <scroll-bar dir="v" start="0" size="6"></scroll-bar>
          </div>
          <div class="desc">Entwurf</div>
        </div>
      </aside>`;
  }

  private center() {
    return html`
      <main class="center">
        <div class="ctop"><mm-ruler dir="h" count="297" .marks=${[10, 102, 197, 292]}></mm-ruler></div>
        <div class="cmid">
          <mm-ruler dir="v" count="243"></mm-ruler>
          <div class="canvas">
            <div class="sheet">
              <div class="area">
                <div class="lead"><strong>proELECTRO AG</strong><div>06.07.2017<br>14:48:13<br>Ackermann</div></div>
                <div class="info">
                  <div><span>mahnbar:</span></div>
                  <div><span>Mahnstufe:</span>-</div>
                  <div><span>Mahnverfahren:</span>-</div>
                  <div><span>Mahndatum:</span>-</div>
                </div>
                <div class="hd">Konto</div>
                <div class="rw">0</div>
                <div class="sub"><div class="h2">Belegnummer</div><div class="r2">1,00</div></div>
              </div>
              <div class="foot"></div>
            </div>
          </div>
        </div>
        <div class="ctabs">
          <button type="button">${ic(14, 14, svg`<path d="M.5 1.500h7v10h-7zM5.500 4.500h8v8h-8z" fill="#fff" stroke="#a7afba"/>`)}Layout</button>
          <button type="button" class="active">${ic(13, 14, svg`<path d="M.5 1.500h12v11H.5z" fill="#dfe3e8" stroke="#667"/><path d="M2 4h5M2 6.500h4M2 9h8" stroke="#667"/><circle cx="9" cy="6" r="2" fill="#8fa5bd" stroke="#556"/>`)}Layout-Vorschau</button>
          <button type="button">${ic(13, 14, svg`<path d="M.5 1.500h12v11H.5z" fill="#dcd97f" stroke="#776"/><path d="M3 4.500h7v5H3z" fill="#8d9a55"/>`)}Vorschau</button>
        </div>
      </main>`;
  }

  private right() {
    return html`
      <aside class="right">
        <div class="title"><span>Variablen/Felder</span><button type="button" aria-label="Schließen">${icons.close()}</button></div>
        <div class="search">${combo("Variablen/Felder durchsuchen", { ph: "Variablen/Felder durchsuchen" })}</div>
        <div class="rt">
          <tree-view class="vartree" role="tree" aria-label="Variablen und Felder" .nodes=${variables}></tree-view>
          ${ic(12, 14, svg`<path d="M0 1h12L7.500 6.500V13h-3V6.500z" fill="#666"/>`)}
        </div>
      </aside>`;
  }

  private groupDialog() {
    return html`
      <section class="win group-win">
        <div class="wt"><button type="button" class="x" aria-label="Schließen">${ic(9, 8, svg`<path d="M1.500 1l6 6M7.500 1l-6 6" stroke="#556" stroke-width="2"/>`)}</button></div>
        <div class="body">
          <div class="gpage">
            <div class="gl"><div></div><div></div></div>
            <div class="gr">
              <div class="gs">${combo("Gruppeneigenschaften durchsuchen", { ph: "Eigenschaften durchsuchen" })}<button type="button" class="ib" aria-label="Info">${icons.info()}</button></div>
              <div class="gb">
                <prop-grid tone="gray" .rows=${groupProps}></prop-grid>
                <div class="gd"><b>Gruppieren nach</b>Der Schlüsselausdruck, dessen Ergebnis den Gruppenwechsel bedingt. Wenn hier nichts angegeben wird, wird die Gruppenzeile nur einmal gedruckt.</div>
              </div>
            </div>
          </div>
          <div class="actions">
            ${helpPair}
            <span class="grow"></span>
            <button type="button" class="btn def">OK</button>
            <button type="button" class="btn">Abbrechen</button>
          </div>
        </div>
      </section>`;
  }

  private editDialog() {
    const tools = [
      ic(14, 12, svg`<path d="M1 9h12M2 3.500v4M5 3.500v4M8 3.500v4M11 3.500v4" stroke="#c0c4cc"/>`),
      ic(14, 12, svg`<path d="M3 1C1 3.500 1 8.500 3 11M11 1c2 2.500 2 7.500 0 10M4.500 3.500l2 5 1-3 1 3 1.500-5" stroke="#7f8a9c"/>`),
      ic(16, 14, svg`<path d="M8 1.500H2l3.500 4L2 9.500h6" stroke="#444" stroke-width="1.200"/><path d="M10 6.500h5M10 9h5M10 11.500h5" stroke="#aaa"/>`),
      ic(16, 14, svg`<circle cx="5" cy="5" r="2.500" fill="#3a6ea8"/><path d="M1 13c0-6 8-6 8 0z" fill="#3a6ea8"/><circle cx="11" cy="3.500" r="2.500" fill="#57a98a"/><path d="M9 10h6c0-4-4-4-6-2z" fill="#57a98a"/>`),
      nothing,
      ic(12, 14, svg`<path d="M2 2.500h7M2 5h7M4 7.500h5" stroke="#a5adb9"/><path d="M10.500 1v12M8 1.500h3" stroke="#4f5a70" stroke-width="1.300"/>`),
      ic(12, 12, svg`<path d="M1 1.500h10M4 4.500h7M4 7.500h7M1 10.500h10" stroke="#999"/>`),
      ic(14, 12, svg`<path d="M1 3.500h5M3 1L1 3.500 3 6" stroke="#667"/><path d="M7 4.500h6M5 7.500h8M5 10.500h8" stroke="#999"/>`),
      ic(14, 12, svg`<path d="M5 1L1.500 4.500 5 8M2 4.500h6c5 0 4.500 6 1 6.500" stroke="#4a549c" stroke-width="1.700"/>`),
      ic(14, 12, svg`<path d="M9 1l3.500 3.500L9 8M12 4.500H6c-5 0-4.500 6-1 6.500" stroke="#bfc3ca" stroke-width="1.500"/>`),
    ];
    return html`
      <section class="win edit-win">
        <div class="wt">${ic(12, 12, svg`<circle cx="5" cy="6" r="4" fill="#eaf3fb"/><path d="M5 1h5v6l-2 2z" fill="#3b6a9a"/>`)}<h2>Tabelle bearbeiten</h2><button type="button" class="x" aria-label="Schließen">${ic(9, 8, svg`<path d="M1.500 1l6 6M7.500 1l-6 6" stroke="#fff" stroke-width="2"/>`)}</button></div>
        <div class="body">
          <div class="dtabs">
            <button type="button" class="active">Daten und Funktionen</button>
            ${["Bedingung", "Text", "Datumsformat", "Zahlenformat", "Operatoren", "Farben"].map((t) => html`<button type="button">${t}</button>`)}
          </div>
          <div class="dpage">
            <div class="two">
              <div class="lf">
                ${combo("Variable suchen", { value: "mahnbar" })}
                <div class="lfb"><tree-view role="tree" aria-label="Daten" .nodes=${found}></tree-view><scroll-bar dir="v" start="17" size="55"></scroll-bar></div>
                <scroll-bar dir="h" start="1" size="32"></scroll-bar>
              </div>
              <div class="rf">
                <div class="fl"><label>Funktionen:</label><button type="button" aria-label="Ansicht">${icons.listSort()}</button></div>
                ${combo("Funktionen", { ph: "Suchbegriff oder Funktionsname" })}
                <div class="fb"><tree-view role="tree" aria-label="Funktionen" .nodes=${functions}></tree-view><scroll-bar dir="v" start="0" size="38"></scroll-bar></div>
              </div>
            </div>
            <div class="ins"><textarea aria-label="Beschreibung" readonly></textarea><button type="button" class="btn dis">Einfügen</button></div>
          </div>
          <div class="formula">
            <div class="fx"><textarea aria-label="Formel" .value=${'"Summe mahnbar EW: " +'}></textarea><scroll-bar dir="h" start="0" size="2"></scroll-bar></div>
            <div class="tool">${tools.map((t) => t === nothing ? html`<span></span>` : html`<button type="button" aria-label="Werkzeug">${t}</button>`)}</div>
          </div>
          <div class="err">${icons.warn()}<span>Syntaxfehler: '"Summe mahnbar EW: " +' kann nicht interpretiert werden</span></div>
          <div class="actions">
            ${helpPair}
            <span class="grow"></span>
            <button type="button" class="btn"><u>O</u>K</button>
            <button type="button" class="btn">Abbrechen</button>
          </div>
        </div>
      </section>`;
  }
}
